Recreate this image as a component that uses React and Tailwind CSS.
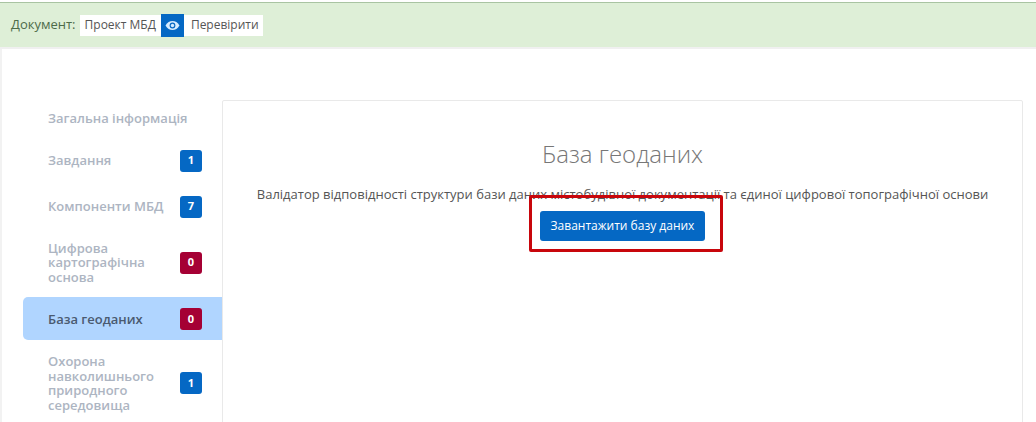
const items = [
  { label: "Загальна інформація", h: "h-[36px]" },
  { label: "Завдання", h: "h-[43px]", badge: "1" },
  { label: "Компоненти МБД", h: "h-[43px]", badge: "7" },
  { label: "Цифрова картографічна основа", h: "h-[63px]", badge: "0", red: true },
  { label: "База геоданих", h: "h-[43px]", badge: "0", red: true, active: true },
  { label: "Охорона навколишнього природного середовища", h: "h-[80px]", badge: "1" },
];

function NavItem({ label, h, badge, red, active }) {
  return (
    <div className={`${h} flex shrink-0 items-center justify-between rounded-l-[5px] pl-[25px] pr-[20px] ${active ? "bg-[#b0d5ff] pt-px" : ""}`}>
      <span className={`max-w-[120px] text-[13px] font-semibold leading-[14.5px] ${active ? "text-[#4a5a70]" : "text-[#adb5c2]"} ${badge ? "" : "max-w-none whitespace-nowrap"}`}>
        {label}
      </span>
      {badge && (
        <span className={`flex h-[22px] w-[22px] items-center justify-center rounded-[3px] text-[11px] font-bold text-white ${red ? "bg-[#a50034]" : "bg-[#0568c4]"}`}>
          {badge}
        </span>
      )}
    </div>
  );
}

export default function App() {
  return (
    <div className="h-[422px] w-[1036px] overflow-hidden bg-white font-['Open_Sans',sans-serif]">
      <div className="mt-[2px] flex h-[45px] items-center border-t border-[#a9c4a2] bg-[#deefd7] pl-[11px] text-[12px]">
        <span className="text-[13px] text-[#4d6b4a]">Документ:</span>
        <div className="ml-[4px] flex h-[21px] items-center bg-white text-[#555]">
          <span className="whitespace-nowrap px-[5px]">Проект МБД</span>
          <span className="flex h-[23px] w-[23px] items-center justify-center bg-[#0568c4]">
            <svg width="15" height="11" viewBox="0 0 15 11" fill="none">
              <path d="M0.5 5.5C2.3 2.4 4.7 1 7.5 1s5.2 1.4 7 4.5c-1.8 3.1-4.2 4.5-7 4.5s-5.2-1.4-7-4.5Z" fill="#d6ecff" />
              <circle cx="7.5" cy="5.5" r="2.9" fill="#0568c4" />
              <circle cx="7.5" cy="5.5" r="1.7" fill="#d6ecff" />
            </svg>
          </span>
          <span className="whitespace-nowrap pl-[7px] pr-[4px]">Перевірити</span>
        </div>
      </div>
      <div className="h-[2px] bg-[#f0f0f0]" />
      <div className="relative flex h-[373px] border-l-2 border-[#f2f2f2] pl-[21px] pt-[51px]">
        <div className="flex w-[199px] shrink-0 flex-col gap-[3px]">
          {items.map((item) => (
            <NavItem key={item.label} {...item} />
          ))}
        </div>
        <div className="h-[340px] w-[801px] shrink-0 rounded-[2px] border border-[#e9e9e9] text-center">
          <h2 className="mt-[35px] text-[24px] font-light leading-[36px] text-[#777]">База геоданих</h2>
          <p className="mt-[13px] whitespace-nowrap text-[13px] leading-[18px] text-[#555]">
            Валідатор відповідності структури бази даних містобудівної документації та єдиної цифрової топографічної основи
          </p>
          <button className="mt-[8px] h-[30px] w-[165px] rounded-[3px] bg-[#0568c4] text-[12px] font-normal text-white">
            Завантажити базу даних
          </button>
        </div>
        <div className="absolute left-[527px] top-[146px] h-[57px] w-[194px] rounded-[2px] border-[3px] border-[#c8060c]" />
      </div>
    </div>
  );
}
